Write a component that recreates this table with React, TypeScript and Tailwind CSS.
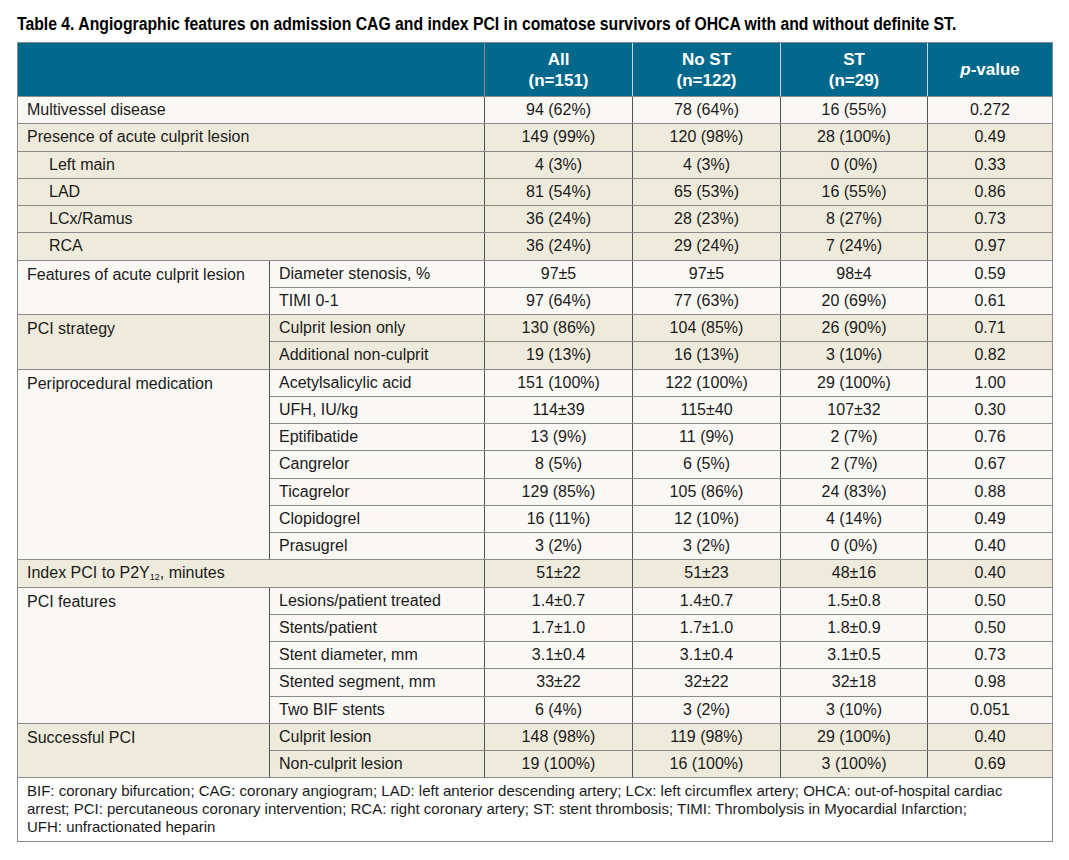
import React from "react"

type Row = {
  group?: string
  groupSpan?: number
  label: string
  indent?: boolean
  vals: string[]
  shade: boolean
  full?: boolean
}

const LIGHT = "bg-[#faf8f4]"
const BEIGE = "bg-[#efebdc]"

const rows: Row[] = [
  { label: "Multivessel disease", full: true, vals: ["94 (62%)", "78 (64%)", "16 (55%)", "0.272"], shade: false },
  { label: "Presence of acute culprit lesion", full: true, vals: ["149 (99%)", "120 (98%)", "28 (100%)", "0.49"], shade: true },
  { label: "Left main", full: true, indent: true, vals: ["4 (3%)", "4 (3%)", "0 (0%)", "0.33"], shade: true },
  { label: "LAD", full: true, indent: true, vals: ["81 (54%)", "65 (53%)", "16 (55%)", "0.86"], shade: true },
  { label: "LCx/Ramus", full: true, indent: true, vals: ["36 (24%)", "28 (23%)", "8 (27%)", "0.73"], shade: true },
  { label: "RCA", full: true, indent: true, vals: ["36 (24%)", "29 (24%)", "7 (24%)", "0.97"], shade: true },
  { group: "Features of acute culprit lesion", groupSpan: 2, label: "Diameter stenosis, %", vals: ["97±5", "97±5", "98±4", "0.59"], shade: false },
  { label: "TIMI 0-1", vals: ["97 (64%)", "77 (63%)", "20 (69%)", "0.61"], shade: false },
  { group: "PCI strategy", groupSpan: 2, label: "Culprit lesion only", vals: ["130 (86%)", "104 (85%)", "26 (90%)", "0.71"], shade: true },
  { label: "Additional non-culprit", vals: ["19 (13%)", "16 (13%)", "3 (10%)", "0.82"], shade: true },
  { group: "Periprocedural medication", groupSpan: 7, label: "Acetylsalicylic acid", vals: ["151 (100%)", "122 (100%)", "29 (100%)", "1.00"], shade: false },
  { label: "UFH, IU/kg", vals: ["114±39", "115±40", "107±32", "0.30"], shade: false },
  { label: "Eptifibatide", vals: ["13 (9%)", "11 (9%)", "2 (7%)", "0.76"], shade: false },
  { label: "Cangrelor", vals: ["8 (5%)", "6 (5%)", "2 (7%)", "0.67"], shade: false },
  { label: "Ticagrelor", vals: ["129 (85%)", "105 (86%)", "24 (83%)", "0.88"], shade: false },
  { label: "Clopidogrel", vals: ["16 (11%)", "12 (10%)", "4 (14%)", "0.49"], shade: false },
  { label: "Prasugrel", vals: ["3 (2%)", "3 (2%)", "0 (0%)", "0.40"], shade: false },
  { label: "__p2y12", full: true, vals: ["51±22", "51±23", "48±16", "0.40"], shade: true },
  { group: "PCI features", groupSpan: 5, label: "Lesions/patient treated", vals: ["1.4±0.7", "1.4±0.7", "1.5±0.8", "0.50"], shade: false },
  { label: "Stents/patient", vals: ["1.7±1.0", "1.7±1.0", "1.8±0.9", "0.50"], shade: false },
  { label: "Stent diameter, mm", vals: ["3.1±0.4", "3.1±0.4", "3.1±0.5", "0.73"], shade: false },
  { label: "Stented segment, mm", vals: ["33±22", "32±22", "32±18", "0.98"], shade: false },
  { label: "Two BIF stents", vals: ["6 (4%)", "3 (2%)", "3 (10%)", "0.051"], shade: false },
  { group: "Successful PCI", groupSpan: 2, label: "Culprit lesion", vals: ["148 (98%)", "119 (98%)", "29 (100%)", "0.40"], shade: true },
  { label: "Non-culprit lesion", vals: ["19 (100%)", "16 (100%)", "3 (100%)", "0.69"], shade: true },
]

const cell = "h-[27.25px] border-t border-b border-t-[#8a8a8a] border-b-[#8a8a8a] p-0 leading-none"
const head = "border-y border-l border-[#8a8a8a] border-l-[#c9d6dc] font-bold"

export default function App() {
  return (
    <div className="w-[1069px] h-[860px] bg-white pt-[14px] pl-[17px] font-['Liberation_Sans',Arial,sans-serif] text-[#1a1a1a]">
      <h1 className="h-[20px] whitespace-nowrap font-bold text-[17.5px] leading-[20px] text-black">
        <span className="inline-block origin-left scale-x-[0.9]">
          Table 4. Angiographic features on admission CAG and index PCI in comatose survivors of OHCA with and without definite ST.
        </span>
      </h1>
      <table className="mt-[8px] w-[1035px] border-collapse border border-[#8a8a8a] table-fixed text-[16px]">
        <colgroup>
          <col className="w-[252px]" />
          <col className="w-[215px]" />
          <col className="w-[148px]" />
          <col className="w-[148px]" />
          <col className="w-[147px]" />
          <col className="w-[125px]" />
        </colgroup>
        <thead>
          <tr className="h-[54px] bg-[#03698c] text-white text-[17px] leading-[21px]">
            <th colSpan={2} className="border border-[#8a8a8a]"></th>
            <th className={head}>All<br />(n=151)</th>
            <th className={head}>No ST<br />(n=122)</th>
            <th className={head}>ST<br />(n=29)</th>
            <th className={head}><i>p</i>-value</th>
          </tr>
        </thead>
        <tbody>
          {rows.map((r, i) => {
            const bg = r.shade ? BEIGE : LIGHT
            return (
              <tr key={i} className={bg}>
                {r.group && (
                  <td rowSpan={r.groupSpan} className={`${cell} border-r border-r-[#555] align-top pl-[9px] pt-[6px]`}>
                    {r.group}
                  </td>
                )}
                <td
                  colSpan={r.full ? 2 : 1}
                  className={`${cell} border-r border-r-[#555] ${r.indent ? "pl-[31px]" : "pl-[9px]"}`}
                >
                  {r.label === "__p2y12" ? (
                    <span>
                      Index PCI to P2Y<sub className="text-[9px] relative top-[2px]">12</sub>, minutes
                    </span>
                  ) : (
                    r.label
                  )}
                </td>
                {r.vals.map((v, j) => (
                  <td key={j} className={`${cell} text-center ${j < 3 ? "border-r border-r-[#555]" : ""}`}>
                    {v}
                  </td>
                ))}
              </tr>
            )
          })}
          <tr className="bg-white">
            <td colSpan={6} className="border border-[#8a8a8a] pl-[9px] pt-[4px] pb-[5px] text-[15px] leading-[18px]">
              BIF: coronary bifurcation; CAG: coronary angiogram; LAD: left anterior descending artery; LCx: left circumflex artery; OHCA: out-of-hospital cardiac
              <br />
              arrest; PCI: percutaneous coronary intervention; RCA: right coronary artery; ST: stent thrombosis; TIMI: Thrombolysis in Myocardial Infarction;
              <br />
              UFH: unfractionated heparin
            </td>
          </tr>
        </tbody>
      </table>
    </div>
  )
}
